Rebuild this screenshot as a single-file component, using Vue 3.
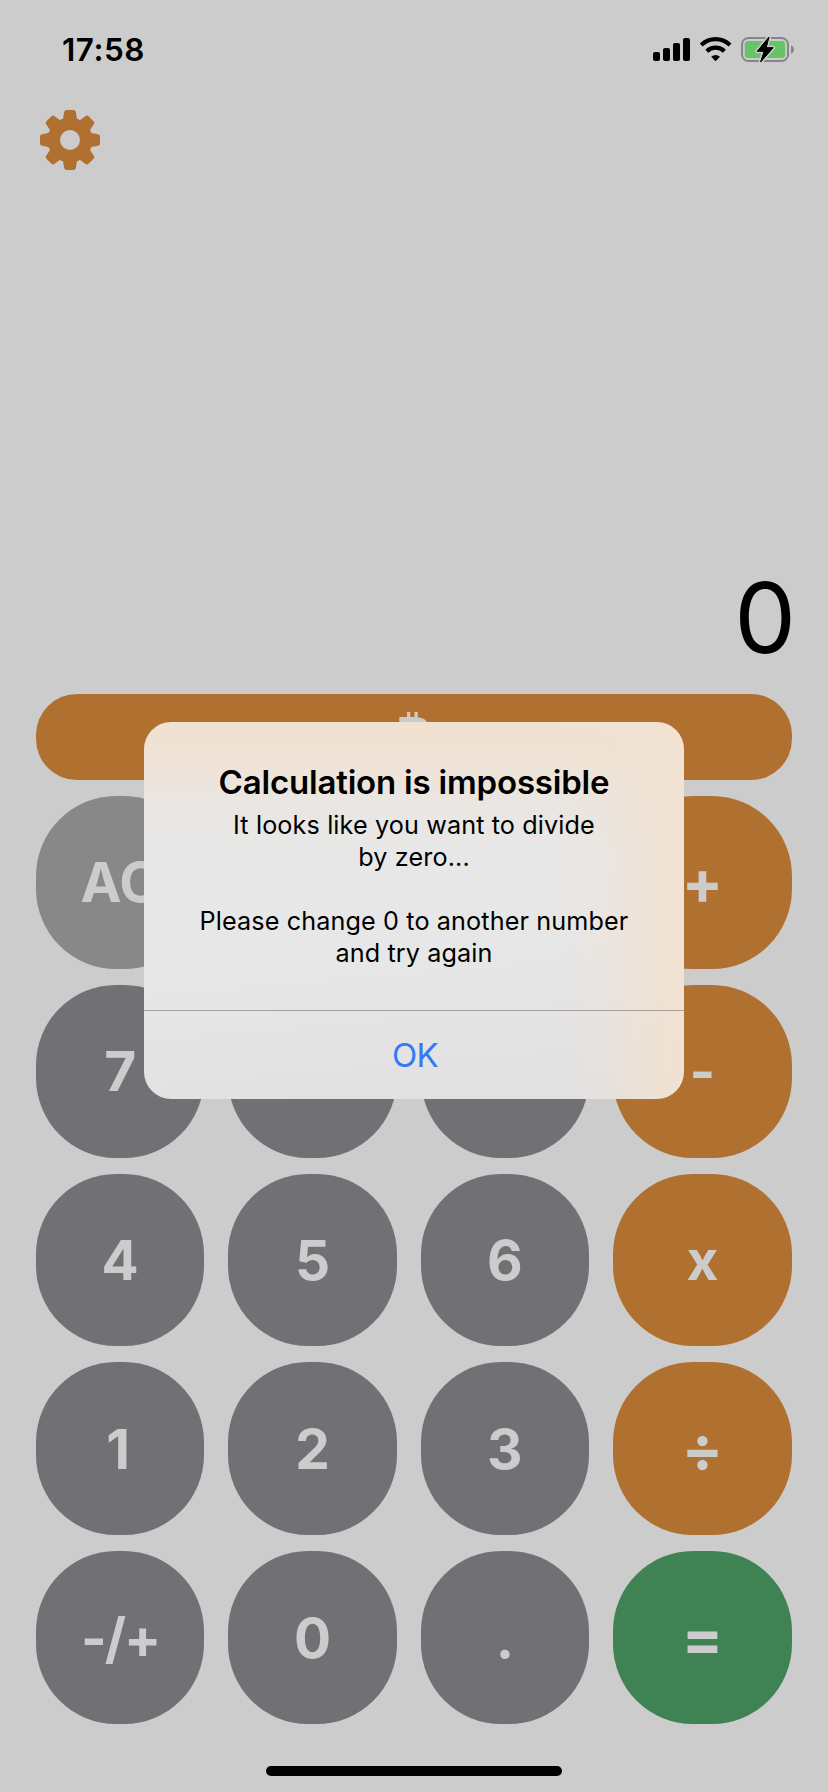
<script setup>
const keys = [
  { label: 'AC', kind: 'clear' },
  { label: '', kind: 'clear' },
  { label: '', kind: 'clear' },
  { label: '+', kind: 'op', glyph: 'sign' },
  { label: '7', kind: 'num' },
  { label: '', kind: 'num' },
  { label: '', kind: 'num' },
  { label: '-', kind: 'op' },
  { label: '4', kind: 'num' },
  { label: '5', kind: 'num' },
  { label: '6', kind: 'num' },
  { label: 'x', kind: 'op' },
  { label: '1', kind: 'num', glyph: 'one' },
  { label: '2', kind: 'num' },
  { label: '3', kind: 'num' },
  { label: '÷', kind: 'op', glyph: 'sign' },
  { label: '-/+', kind: 'num', glyph: 'toggle' },
  { label: '0', kind: 'num' },
  { label: '.', kind: 'num' },
  { label: '=', kind: 'equals', glyph: 'sign' },
]
const teeth = [0, 45, 90, 135, 180, 225, 270, 315]
</script>

<template>
  <div class="phone">
    <header class="status">
      <span class="time">17:58</span>
      <svg class="indicators" width="142" height="28" viewBox="0 0 142 28">
        <g fill="#000">
          <rect x="0" y="16" width="7" height="9" rx="2" />
          <rect x="10" y="12" width="7" height="13" rx="2" />
          <rect x="20" y="7" width="7" height="18" rx="2" />
          <rect x="30" y="2" width="7" height="23" rx="2" />
          <path d="M62.6 25.2 L58.2 20.8 Q62.6 17 67 20.8 Z" />
        </g>
        <g fill="none" stroke="#000" stroke-width="4.2">
          <path d="M48.2 9 Q54.6 3.2 62.6 3.2 Q70.6 3.2 77 9" />
          <path d="M53.8 15.2 Q57.6 11.6 62.6 11.6 Q67.6 11.6 71.4 15.2" />
        </g>
        <rect x="89" y="2" width="46" height="23" rx="6.5" fill="none" stroke="#868686" stroke-width="2" />
        <rect x="91.8" y="4.9" width="40.4" height="17.2" rx="3.6" fill="#65c466" />
        <path d="M138 9.2 Q141 10.4 141 13.5 Q141 16.6 138 17.8 Z" fill="#868686" />
        <path
          d="M116 1 L104.2 15.2 L111.2 15.2 L107.6 26 L120.2 11.7 L113.2 11.7 Z"
          fill="#000" stroke="#ccc" stroke-width="4" stroke-linejoin="round" paint-order="stroke"
        />
        <path
          d="M116 1 L104.2 15.2 L111.2 15.2 L107.6 26 L120.2 11.7 L113.2 11.7 Z"
          fill="#000" stroke="#000" stroke-width="1" stroke-linejoin="round"
        />
      </svg>
    </header>

    <div class="toolbar">
      <svg width="60" height="60" viewBox="-30 -30 60 60">
        <circle r="15.8" fill="none" stroke="#b07030" stroke-width="11.6" />
        <path
          v-for="a in teeth" :key="a" :transform="`rotate(${a})`" fill="#b07030"
          d="M-10 -19 L-9 -20.6 Q-7.3 -20.3 -6.9 -21.8 L-5.8 -28 Q-5.4 -30 -3.4 -30 L3.4 -30 Q5.4 -30 5.8 -28 L6.9 -21.8 Q7.3 -20.3 9 -20.6 L10 -19 Z"
        />
      </svg>
    </div>

    <div class="display"><span>0</span></div>

    <main class="pad">
      <div class="key banner"><span>₿</span></div>
      <div class="grid">
        <div v-for="(k, i) in keys" :key="i" class="key" :class="[k.kind, k.glyph]">
          <span v-if="k.label">{{ k.label }}</span>
        </div>
      </div>
    </main>

    <div class="home"></div>

    <section class="alert">
      <div class="body">
        <h1>Calculation is impossible</h1>
        <p>It looks like you want to divide</p>
        <p>by zero...</p>
        <p></p>
        <p>Please change 0 to another number</p>
        <p>and try again</p>
      </div>
      <div class="action"><span>OK</span></div>
    </section>
  </div>
</template>

<style>
body { background: #ccc; }
</style>

<style scoped>
.phone {
  position: relative;
  width: 828px;
  height: 1792px;
  overflow: hidden;
  background: #ccc;
  color: #000;
  font-family: Inter, "Liberation Sans", sans-serif;
  display: flex;
  flex-direction: column;
  box-sizing: border-box;
}
.status {
  height: 110px;
  padding: 36px 33px 0 62px;
  display: flex;
  justify-content: space-between;
  align-items: flex-start;
  box-sizing: border-box;
}
.time {
  font-size: 31.5px;
  font-weight: 600;
  line-height: 28px;
  letter-spacing: 0.5px;
}
.indicators { display: block; }
.toolbar { height: 60px; padding-left: 40px; }
.toolbar svg { display: block; }
.display {
  height: 524px;
  padding: 0 32px 18px 0;
  box-sizing: border-box;
  display: flex;
  justify-content: flex-end;
  align-items: flex-end;
  font-size: 98px;
  line-height: 116px;
}
.pad {
  height: 1030px;
  padding: 0 36px;
  display: flex;
  flex-direction: column;
  gap: 16px;
}
.grid {
  height: 928px;
  display: grid;
  grid-template-columns: repeat(3, 1fr) 179px;
  grid-template-rows: repeat(5, 1fr);
  gap: 16px 24px;
}
.key {
  display: flex;
  align-items: center;
  justify-content: center;
  min-height: 0;
  min-width: 0;
  border-radius: 80px;
  color: #ccc;
  font-size: 55px;
  font-weight: 700;
  line-height: 66px;
}
.banner { height: 86px; border-radius: 41px; background: #b07030; }
.clear { background: #888; }
.num { background: #717075; }
.op { background: #b07030; }
.equals { background: #3f8253; }
.sign { font-size: 61px; }
.one { padding-right: 4px; }
.toggle { letter-spacing: -2px; }
.home {
  width: 296px;
  height: 10px;
  margin: 42px auto 0;
  border-radius: 5px;
  background: #000;
}
.alert {
  position: absolute;
  left: 144px;
  top: 722px;
  width: 540px;
  height: 377px;
  border-radius: 27px;
  overflow: hidden;
  background:
    linear-gradient(to left, #f1e2d2 0, rgba(241, 226, 210, 0.75) 40px, rgba(241, 226, 210, 0.25) 85px, rgba(241, 226, 210, 0) 135px),
    linear-gradient(to bottom, #f1e1d0 0, rgba(241, 225, 208, 0.78) 35px, rgba(241, 225, 208, 0.28) 80px, rgba(241, 225, 208, 0) 130px),
    linear-gradient(175deg, #e8e8e8 0, #e7e7e7 60%, #e0e0e1 100%);
  display: flex;
  flex-direction: column;
  text-align: center;
}
.body {
  height: 289px;
  padding-top: 38px;
  box-sizing: border-box;
  border-bottom: 1px solid rgba(90, 80, 80, 0.45);
}
h1 {
  margin: 0 0 5px;
  font-size: 33px;
  line-height: 44px;
  font-weight: 600;
  letter-spacing: -0.19px;
}
p {
  margin: 0;
  height: 32px;
  font-size: 25.2px;
  line-height: 32px;
  letter-spacing: 0.12px;
}
.action {
  flex: 1;
  padding-left: 2px;
  display: flex;
  align-items: center;
  justify-content: center;
  font-size: 33px;
  letter-spacing: -0.6px;
  color: #3478f6;
}
</style>
